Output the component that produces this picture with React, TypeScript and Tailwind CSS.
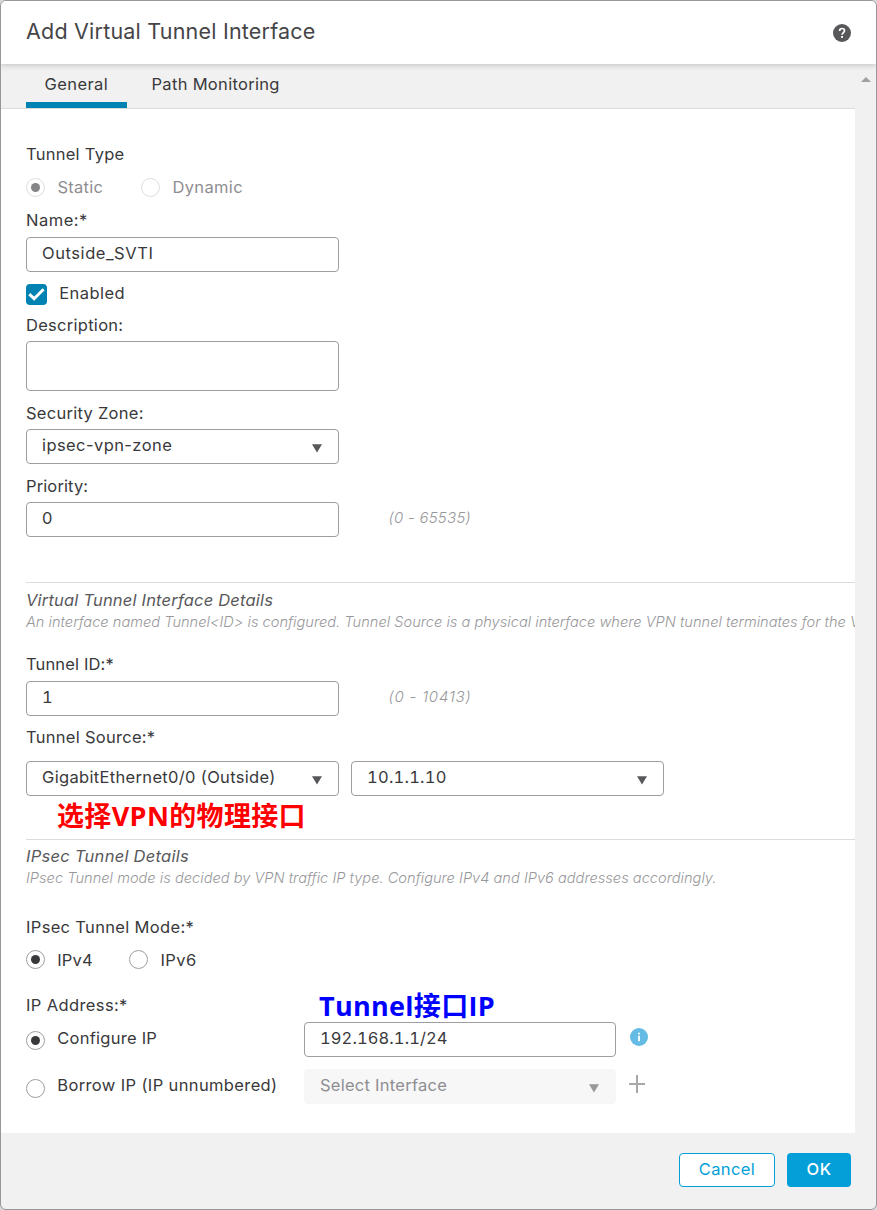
import type { ReactNode } from "react";

function Caret({ className = "text-[#58585b]" }: { className?: string }) {
  return (
    <svg className={`shrink-0 ${className}`} width="10" height="9" viewBox="0 0 10 9" fill="currentColor">
      <path d="M0 0.3H10L5 8.6Z" />
    </svg>
  );
}

function Field({ children, className = "" }: { children?: ReactNode; className?: string }) {
  return (
    <div className={`flex h-[35px] shrink-0 items-start rounded-[4px] border border-[#9e9ea2] bg-white pt-[3px] pl-[15px] ${className}`}>
      {children}
    </div>
  );
}

function Select({ children, className = "", muted = false }: { children?: ReactNode; className?: string; muted?: boolean }) {
  return (
    <div
      className={`flex h-[35px] shrink-0 items-start justify-between rounded-[4px] border pt-[3px] pr-4 pl-[15px] ${
        muted ? "border-[#f7f7f7] bg-[#f7f7f7] text-[#8e8e91]" : "border-[#9e9ea2] bg-white"
      } ${className}`}
    >
      {children}
      <div className="pt-[11px]">
        <Caret className={muted ? "text-[#98989b]" : "text-[#58585b]"} />
      </div>
    </div>
  );
}

function Radio({ checked = false, muted = false }: { checked?: boolean; muted?: boolean }) {
  return (
    <span
      className={`flex size-[19px] shrink-0 items-center justify-center rounded-full border bg-white ${
        muted ? "border-[#dededf]" : "border-[#9e9ea2]"
      }`}
    >
      {checked && <span className={`size-[9px] rounded-full ${muted ? "bg-[#858588]" : "bg-[#39393b]"}`} />}
    </span>
  );
}

function Label({ children, className = "" }: { children: ReactNode; className?: string }) {
  return <div className={`h-6 ${className}`}>{children}</div>;
}

export default function App() {
  return (
    <div className="h-[1210px] w-[877px] bg-[#d8d8d8]">
      <div className="flex h-full w-full flex-col overflow-hidden rounded-[6px] border border-[#97979b] bg-[#f1f1f1] font-['Inter','Noto_Sans_CJK_SC',sans-serif] text-[16.5px] leading-6 whitespace-nowrap text-[#39393b]">
        <header className="relative z-10 flex h-[63px] shrink-0 items-center justify-between bg-white pr-[25px] pl-[25px] shadow-[0_2px_5px_rgba(0,0,0,0.16)]">
          <h1 className="-mt-[4px] text-[21.5px] leading-8 tracking-[0.21px] text-[#454548]">Add Virtual Tunnel Interface</h1>
          <svg width="18" height="18" viewBox="0 0 18 18" className="mt-[1px]">
            <circle cx="9" cy="9" r="9" fill="#58585b" />
            <path d="M6.6 6.9C6.6 5.4 7.6 4.5 9.1 4.5S11.5 5.4 11.5 6.7C11.5 8.5 9.1 8.6 9.1 10.8" fill="none" stroke="#fff" strokeWidth="1.7" />
            <rect x="8.1" y="12" width="1.9" height="1.9" fill="#fff" />
          </svg>
        </header>

        <div className="flex h-[1069px] shrink-0">
          <main className="relative flex w-[854px] flex-col overflow-hidden bg-white">
            <nav className="flex h-[45px] shrink-0 border-b border-[#dcdcdd] bg-[#f1f1f1] pl-[25px]">
              <div className="h-[44px] w-[101px] border-b-[6px] border-[#0083b3] pt-[8px] pl-[18.5px] tracking-[0.42px]">General</div>
              <div className="pt-[8px] pl-[24.5px] tracking-[0.31px]">Path Monitoring</div>
            </nav>

            <section className="flex h-[473px] shrink-0 flex-col pt-[33px] pl-[25px]">
              <Label className="tracking-[0.26px]">Tunnel Type</Label>
              <div className="mt-[9px] flex h-6 items-center text-[#8e8e91]">
                <Radio checked muted />
                <span className="ml-[12.4px] w-[84px] tracking-[0.3px]">Static</span>
                <span className="-ml-[0.4px]">
                  <Radio muted />
                </span>
                <span className="ml-[12.4px] tracking-[0.36px]">Dynamic</span>
              </div>
              <Label className="mt-[9px] tracking-[0.5px]">Name:*</Label>
              <Field className="mt-[5px] w-[313px]">
                <span className="tracking-[0.57px]">Outside_SVTI</span>
              </Field>
              <div className="mt-[9px] flex h-6 items-start">
                <span className="mt-[3px] flex size-[21px] items-center justify-center rounded-[4px] bg-[#0083b3]">
                  <svg width="17" height="14" viewBox="0 0 17 14" fill="none" stroke="#fff" strokeWidth="3">
                    <path d="M1.3 6.2L6.1 10.7L15.6 1.2" />
                  </svg>
                </span>
                <span className="ml-[12.2px] tracking-[0.45px]">Enabled</span>
              </div>
              <Label className="mt-[8px] tracking-[0.28px]">Description:</Label>
              <div className="mt-[4px] h-[50px] w-[313px] shrink-0 rounded-[4px] border border-[#9e9ea2]" />
              <Label className="mt-[10px] tracking-[0.27px]">Security Zone:</Label>
              <Select className="mt-[4px] w-[313px]">
                <span className="tracking-[0.42px]">ipsec-vpn-zone</span>
              </Select>
              <Label className="mt-[10px] tracking-[0.12px]">Priority:</Label>
              <div className="mt-[4px] flex items-start">
                <Field className="w-[313px]">0</Field>
                <span className="mt-[4px] ml-[49.5px] text-[15px] font-light text-[#98989b] italic tracking-[0.25px]">(0 - 65535)</span>
              </div>
            </section>

            <section className="ml-[25px] flex h-[257px] shrink-0 flex-col border-t border-[#dcdcdd] pt-[5px]">
              <h2 className="h-6 text-[#58585b] italic tracking-[0.19px]">Virtual Tunnel Interface Details</h2>
              <p className="-mt-[2px] h-6 text-[14.6px] font-light text-[#98989b] italic tracking-[0.015px]">
                An interface named Tunnel&lt;ID&gt; is configured. Tunnel Source is a physical interface where VPN tunnel terminates for the VTI.
              </p>
              <Label className="mt-[18px] tracking-[0.14px]">Tunnel ID:*</Label>
              <div className="mt-[5px] flex items-start">
                <Field className="w-[313px]">
                  <span className="tabular-nums">1</span>
                </Field>
                <span className="mt-[4px] ml-[49.5px] text-[15px] font-light text-[#98989b] italic tracking-[0.79px]">(0 - 10413)</span>
              </div>
              <Label className="mt-[9px] tracking-[0.28px]">Tunnel Source:*</Label>
              <div className="mt-[12px] flex gap-3">
                <Select className="w-[313px]">
                  <span className="tracking-[0.33px]">GigabitEthernet0/0 (Outside)</span>
                </Select>
                <Select className="w-[313px]">
                  <span className="tabular-nums tracking-[0.24px]">10.1.1.10</span>
                </Select>
              </div>
            </section>

            <section className="ml-[25px] flex h-[294px] shrink-0 flex-col border-t border-[#dcdcdd] pt-[4px]">
              <h2 className="h-6 text-[#58585b] italic tracking-[0.27px]">IPsec Tunnel Details</h2>
              <p className="-mt-[2px] h-6 text-[14.6px] font-light text-[#98989b] italic tracking-[0.02px]">
                IPsec Tunnel mode is decided by VPN traffic IP type. Configure IPv4 and IPv6 addresses accordingly.
              </p>
              <Label className="mt-[25px] tracking-[0.33px]">IPsec Tunnel Mode:*</Label>
              <div className="mt-[9px] flex h-6 items-start">
                <span className="mt-[2px]">
                  <Radio checked />
                </span>
                <span className="ml-[12.2px] w-[72.3px] tracking-[0.15px]">IPv4</span>
                <span className="mt-[2px]">
                  <Radio />
                </span>
                <span className="ml-[12px] tracking-[0.4px]">IPv6</span>
              </div>
              <Label className="mt-[21px] tracking-[0.38px]">IP Address:*</Label>
              <div className="mt-[5px] flex h-[35px] items-start">
                <span className="mt-[9px]">
                  <Radio checked />
                </span>
                <span className="mt-[4px] ml-[12.3px] w-[246.7px] tracking-[0.25px]">Configure IP</span>
                <Field className="w-[312px]">
                  <span className="tabular-nums tracking-[0.1px]">192.168.1.1/24</span>
                </Field>
                <svg className="mt-[6px] ml-[14px]" width="18" height="18" viewBox="0 0 18 18">
                  <circle cx="9" cy="9" r="9" fill="#64bbe3" />
                  <rect x="8.1" y="4.7" width="1.8" height="1.7" fill="#fff" />
                  <rect x="8.1" y="7.7" width="1.8" height="5.5" fill="#fff" />
                </svg>
              </div>
              <div className="mt-[12px] flex h-[35px] items-start">
                <span className="mt-[10px]">
                  <Radio />
                </span>
                <span className="mt-[4px] ml-[12.3px] w-[246.7px] tracking-[0.37px]">Borrow IP (IP unnumbered)</span>
                <Select muted className="w-[312px]">
                  <span className="tracking-[0.26px]">Select Interface</span>
                </Select>
                <svg className="mt-[6px] ml-[13px]" width="16" height="18" viewBox="0 0 16 18" fill="#a8a8ab">
                  <path d="M7 0H9V8H16V10H9V18H7V10H0V8H7Z" />
                </svg>
              </div>
            </section>

            <div className="absolute top-[734px] left-[56px] font-['Open_Sans','Noto_Sans_CJK_SC',sans-serif] text-[27px] leading-[36px] font-bold tracking-[0.35px] text-[#ff0000]">
              选择VPN的物理接口
            </div>
            <div className="absolute top-[924px] left-[318px] font-['Open_Sans','Noto_Sans_CJK_SC',sans-serif] text-[27px] leading-[36px] font-bold tracking-[0.3px] text-[#0000ff]">
              Tunnel接口IP
            </div>
          </main>

          <div className="flex w-[21px] justify-center pt-[13px]">
            <svg width="10" height="5" viewBox="0 0 10 5" fill="#a0a0a0">
              <path d="M5 0L10 5H0Z" />
            </svg>
          </div>
        </div>

        <footer className="flex flex-1 items-start justify-end gap-3 pt-[20px] pr-[25px]">
          <button className="h-[34px] w-[96px] rounded-[4px] border border-[#049fd9] bg-white pb-[2px] tracking-[0.4px] text-[#049fd9]">Cancel</button>
          <button className="h-[34px] w-[64px] rounded-[4px] bg-[#049fd9] pb-[2px] font-medium tracking-[0.4px] text-white">OK</button>
        </footer>
      </div>
    </div>
  );
}
